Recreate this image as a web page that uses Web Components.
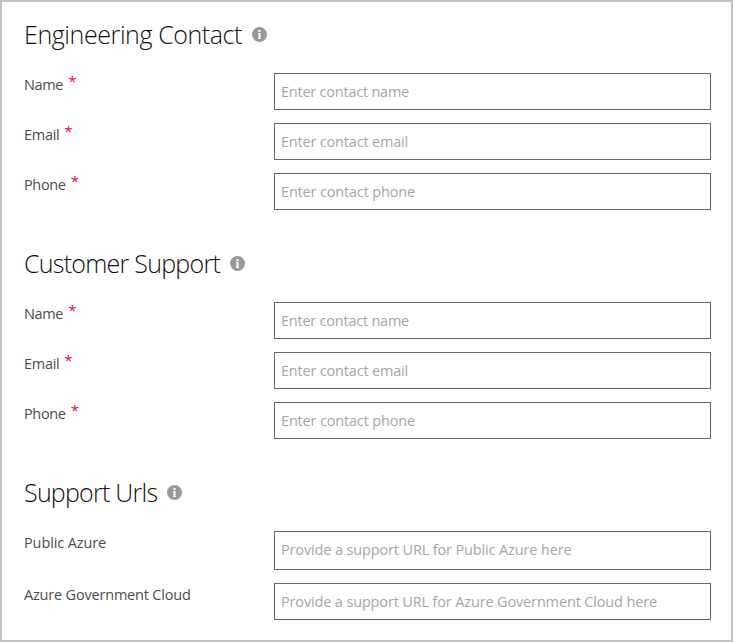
<!DOCTYPE html>
<html lang="en">
<head>
<meta charset="utf-8">
<title>Contacts</title>
<style>
  html, body { margin: 0; height: 100%; }
  body { font-family: "Open Sans", "Noto Sans", sans-serif; background: #fff; overflow: hidden; }
</style>
</head>
<body>
<contact-page>
  <form-section heading="Engineering Contact" spacing="-0.41px">
    <form-row label="Name" required hint="Enter contact name" style="--label-track:-0.35px;--hint-track:-0.23px"></form-row>
    <form-row label="Email" required hint="Enter contact email" style="--label-track:-0.3px;--hint-track:-0.19px"></form-row>
    <form-row label="Phone" required hint="Enter contact phone" style="--label-track:-0.35px;--hint-track:-0.17px"></form-row>
  </form-section>
  <form-section heading="Customer Support" spacing="-0.74px">
    <form-row label="Name" required hint="Enter contact name" style="--label-track:-0.35px;--hint-track:-0.23px"></form-row>
    <form-row label="Email" required hint="Enter contact email" style="--label-track:-0.3px;--hint-track:-0.19px"></form-row>
    <form-row label="Phone" required hint="Enter contact phone" style="--label-track:-0.35px;--hint-track:-0.17px"></form-row>
  </form-section>
  <form-section heading="Support Urls" spacing="-0.76px">
    <form-row label="Public Azure" hint="Provide a support URL for Public Azure here" tall style="--label-track:-0.12px;--hint-track:-0.14px"></form-row>
    <form-row label="Azure Government Cloud" hint="Provide a support URL for Azure Government Cloud here" style="--label-track:-0.19px;--hint-track:-0.15px"></form-row>
  </form-section>
</contact-page>
<script>
class ContactPage extends HTMLElement {
  constructor() {
    super();
    this.attachShadow({ mode: "open" }).innerHTML = `
      <style>
        :host { display: flex; flex-direction: column; gap: 32px; box-sizing: border-box;
          width: 733px; height: 642px; padding: 11px 20px 0 22px;
          border: 2px solid #c3c3c3; background: #fff; }
      </style>
      <slot></slot>`;
  }
}

class InfoIcon extends HTMLElement {
  constructor() {
    super();
    this.attachShadow({ mode: "open" }).innerHTML = `
      <style>
        :host { display: block; width: 15px; height: 15px; }
        svg { display: block; }
      </style>
      <svg width="15" height="15" viewBox="0 0 15 15" aria-hidden="true">
        <circle cx="7.5" cy="7.5" r="7.5" fill="#999"/>
        <path d="M6.5 3h2v2h-2zM6 6h2.5v5.2H9v.8H6v-.8h.5V6.8H6z" fill="#fff"/>
      </svg>`;
  }
}

class FormSection extends HTMLElement {
  connectedCallback() {
    this.attachShadow({ mode: "open" }).innerHTML = `
      <style>
        :host { display: block; }
        header { display: flex; align-items: center; height: 43px; gap: 10px; margin-bottom: 17px; }
        h2 { margin: 0; font-size: 25px; font-weight: 300; line-height: 43px; color: #111; white-space: nowrap; }
        .rows { display: flex; flex-direction: column; gap: 13px; }
      </style>
      <header><h2></h2><info-icon></info-icon></header>
      <div class="rows"><slot></slot></div>`;
    const h = this.shadowRoot.querySelector("h2");
    h.textContent = this.getAttribute("heading");
    h.style.letterSpacing = this.getAttribute("spacing");
  }
}

class FormRow extends HTMLElement {
  connectedCallback() {
    this.attachShadow({ mode: "open" }).innerHTML = `
      <style>
        :host { display: grid; grid-template-columns: 250px 437px; height: 37px; }
        :host([tall]) { height: 39px; }
        label { display: flex; gap: 5px; font-size: 14.5px; line-height: 24px; color: #4c4c4c;
          letter-spacing: var(--label-track); white-space: nowrap; }
        .star { color: #e8003a; font-size: 15px; font-weight: 300; line-height: 16px; -webkit-text-stroke: .25px #e8003a; }
        input { box-sizing: border-box; width: 100%; height: 100%; margin: 0; padding: 0 6px;
          border: 1px solid #666; border-radius: 0; background: #fff;
          font: 14.5px "Open Sans", sans-serif; letter-spacing: var(--hint-track); color: #333; outline: 0; }
        :host([tall]) input { padding-bottom: 2px; }
        input::placeholder { color: #a6a6a6; opacity: 1; }
      </style>
      <label for="f"><span class="text"></span></label>
      <input id="f" type="text">`;
    const root = this.shadowRoot;
    root.querySelector(".text").textContent = this.getAttribute("label");
    root.querySelector("input").placeholder = this.getAttribute("hint");
    if (this.hasAttribute("required")) {
      const star = document.createElement("span");
      star.className = "star";
      star.textContent = "*";
      root.querySelector("label").append(star);
    }
  }
}

customElements.define("info-icon", InfoIcon);
customElements.define("form-row", FormRow);
customElements.define("form-section", FormSection);
customElements.define("contact-page", ContactPage);
</script>
</body>
</html>
